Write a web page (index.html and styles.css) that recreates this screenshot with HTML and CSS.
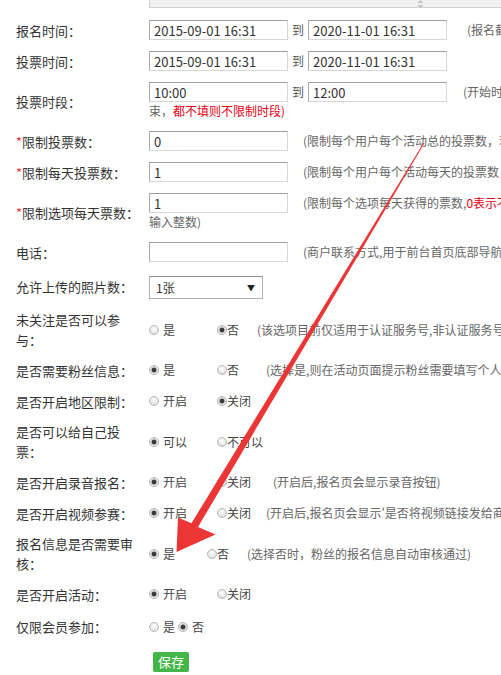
FILE: index.html
```html
<!DOCTYPE html>
<html lang="zh-CN">
<head>
    <meta charset="UTF-8">
    <meta name="viewport" content="width=device-width, initial-scale=1.0">
    <title>活动设置</title>
    <link rel="stylesheet" href="styles.css">
</head>
<body>
    <div class="page">
        <table class="form">
            <tr class="row-tail">
                <th></th>
                <td>
                    <div class="textarea-tail">
                        <svg class="grip" width="7" height="8" viewBox="0 0 7 8"><path d="M3.5 0 L6.5 3 H0.5 Z M3.5 8 L6.5 5 H0.5 Z" fill="#c4c4c4"/></svg>
                    </div>
                </td>
            </tr>
            <tr>
                <th>报名时间：</th>
                <td>
                    <div class="line">
                        <input class="text" type="text" value="2015-09-01 16:31">
                        <span class="to">到</span>
                        <input class="text" type="text" value="2020-11-01 16:31">
                        <span class="hint gap-20">(报名截止时间之后粉丝将不能再报名参加活动)</span>
                    </div>
                </td>
            </tr>
            <tr>
                <th>投票时间：</th>
                <td>
                    <div class="line">
                        <input class="text" type="text" value="2015-09-01 16:31">
                        <span class="to">到</span>
                        <input class="text" type="text" value="2020-11-01 16:31">
                    </div>
                </td>
            </tr>
            <tr>
                <th>投票时段：</th>
                <td>
                    <div class="line">
                        <input class="text" type="text" value="10:00">
                        <span class="to">到</span>
                        <input class="text" type="text" value="12:00">
                        <span class="hint gap-16">(开始时间和结束时间需同时填写，填写后每天只有在该时段内才可以投票，开始时间不能大于结</span>
                    </div>
                    <div class="line-2 hint">束，<span class="red">都不填则不限制时段)</span></div>
                </td>
            </tr>
            <tr>
                <th><span class="req">*</span>限制投票数：</th>
                <td>
                    <div class="line">
                        <input class="text" type="text" value="0">
                        <span class="hint">(限制每个用户每个活动总的投票数，若为0则不限制)</span>
                    </div>
                </td>
            </tr>
            <tr>
                <th><span class="req">*</span>限制每天投票数：</th>
                <td>
                    <div class="line">
                        <input class="text" type="text" value="1">
                        <span class="hint">(限制每个用户每个活动每天的投票数，0表示不限制)</span>
                    </div>
                </td>
            </tr>
            <tr>
                <th><span class="req">*</span>限制选项每天票数：</th>
                <td>
                    <div class="line">
                        <input class="text" type="text" value="1">
                        <span class="hint">(限制每个选项每天获得的票数,<span class="red">0表示不限制</span>，请</span>
                    </div>
                    <div class="line-2 hint">输入整数)</div>
                </td>
            </tr>
            <tr>
                <th>电话：</th>
                <td>
                    <div class="line">
                        <input class="text" type="text" value="">
                        <span class="hint">(商户联系方式,用于前台首页底部导航的一键拨号)</span>
                    </div>
                </td>
            </tr>
            <tr class="row-select">
                <th>允许上传的照片数：</th>
                <td>
                    <div class="select">
                        <select>
                            <option>1张</option>
                            <option>2张</option>
                            <option>3张</option>
                        </select>
                        <span class="caret">▼</span>
                    </div>
                </td>
            </tr>
            <tr>
                <th>未关注是否可以参与：</th>
                <td>
                    <div class="line">
                        <label class="opt opt-first"><input class="radio" type="radio" name="follow">是</label>
                        <label class="opt opt-tight"><input class="radio" type="radio" name="follow" checked>否</label>
                        <span class="hint gap-18">(该选项目前仅适用于认证服务号,非认证服务号请选择是)</span>
                    </div>
                </td>
            </tr>
            <tr>
                <th>是否需要粉丝信息：</th>
                <td>
                    <div class="line">
                        <label class="opt opt-first"><input class="radio" type="radio" name="fans" checked>是</label>
                        <label class="opt opt-tight"><input class="radio" type="radio" name="fans">否</label>
                        <span class="hint gap-27">(选择是,则在活动页面提示粉丝需要填写个人资料)</span>
                    </div>
                </td>
            </tr>
            <tr>
                <th>是否开启地区限制：</th>
                <td>
                    <div class="line">
                        <label class="opt opt-first"><input class="radio" type="radio" name="area">开启</label>
                        <label class="opt opt-tight"><input class="radio" type="radio" name="area" checked>关闭</label>
                    </div>
                </td>
            </tr>
            <tr>
                <th>是否可以给自己投票：</th>
                <td>
                    <div class="line">
                        <label class="opt opt-first"><input class="radio" type="radio" name="self" checked>可以</label>
                        <label class="opt opt-tight"><input class="radio" type="radio" name="self">不可以</label>
                    </div>
                </td>
            </tr>
            <tr>
                <th>是否开启录音报名：</th>
                <td>
                    <div class="line">
                        <label class="opt opt-first"><input class="radio" type="radio" name="voice" checked>开启</label>
                        <label class="opt opt-tight"><input class="radio" type="radio" name="voice">关闭</label>
                        <span class="hint gap-22">(开启后,报名页会显示录音按钮)</span>
                    </div>
                </td>
            </tr>
            <tr>
                <th>是否开启视频参赛：</th>
                <td>
                    <div class="line">
                        <label class="opt opt-first"><input class="radio" type="radio" name="video" checked>开启</label>
                        <label class="opt opt-tight"><input class="radio" type="radio" name="video">关闭</label>
                        <span class="hint">(开启后,报名页会显示'是否将视频链接发给商家')</span>
                    </div>
                </td>
            </tr>
            <tr>
                <th>报名信息是否需要审核：</th>
                <td>
                    <div class="line">
                        <label class="opt opt-first opt-narrow"><input class="radio" type="radio" name="audit" checked>是</label>
                        <label class="opt opt-tight"><input class="radio" type="radio" name="audit">否</label>
                        <span class="hint gap-18">(选择否时，粉丝的报名信息自动审核通过)</span>
                    </div>
                </td>
            </tr>
            <tr>
                <th>是否开启活动：</th>
                <td>
                    <div class="line">
                        <label class="opt opt-first"><input class="radio" type="radio" name="open" checked>开启</label>
                        <label class="opt opt-tight"><input class="radio" type="radio" name="open">关闭</label>
                    </div>
                </td>
            </tr>
            <tr class="row-member">
                <th>仅限会员参加：</th>
                <td>
                    <div class="line">
                        <label class="opt opt-pair"><input class="radio" type="radio" name="member">是</label>
                        <label class="opt"><input class="radio" type="radio" name="member" checked>否</label>
                    </div>
                </td>
            </tr>
            <tr class="row-submit">
                <th></th>
                <td><button class="btn-save" type="button">保存</button></td>
            </tr>
        </table>

        <svg class="arrow" width="501" height="675" viewBox="0 0 501 675">
            <polygon points="424.4,143.3 198,527 215.5,534.5 176.5,552 178,517.5 191.5,523.2 423.6,142.7" fill="#ec3535"/>
        </svg>
    </div>
</body>
</html>
```

FILE: styles.css
```css
body {
    margin: 0;
    background-color: #fff;
    font-family: "Noto Sans CJK SC", "Microsoft YaHei", sans-serif;
    color: #333;
}
.page {
    position: relative;
    overflow: hidden;
    height: 675px;
}
.form {
    table-layout: fixed;
    width: 1000px;
    border-collapse: collapse;
    border-spacing: 0;
    line-height: 20px;
}
.form th {
    width: 127px;
    padding: 5px 6px 5px 16px;
    text-align: left;
    font-weight: normal;
    font-size: 13px;
    color: #333;
    vertical-align: middle;
}
.form td {
    padding: 5px 0 6px;
    white-space: nowrap;
    vertical-align: middle;
}
.row-tail th,
.row-tail td {
    padding-top: 0;
    padding-bottom: 7px;
}
.textarea-tail {
    display: flex;
    align-items: center;
    width: 600px;
    height: 8px;
    box-sizing: border-box;
    background-color: #f1f1f1;
    border: 1px solid #cfcfcf;
    border-top: none;
}
.grip {
    margin-left: 267px;
}
.row-select td {
    padding-top: 7px;
    padding-bottom: 6px;
}
.row-member td {
    padding-top: 7px;
    padding-bottom: 7px;
}
.row-submit td {
    padding: 6px 0 5px;
}
.line {
    display: flex;
    align-items: center;
    height: 20px;
}
.line > * {
    flex-shrink: 0;
}
.line-2 {
    line-height: 18px;
}
.text {
    width: 139px;
    height: 20px;
    box-sizing: border-box;
    margin: 0;
    padding: 0 4px;
    border: 1px solid #d6d6d6;
    border-top-color: #9e9e9e;
    border-left-color: #ababab;
    font-family: inherit;
    font-size: 13px;
    color: #333;
    outline: none;
}
.to {
    margin: 0 4px 0 4px;
    font-size: 12px;
    color: #555;
}
.hint {
    margin-left: 15px;
    font-size: 12px;
    color: #666;
}
.line-2.hint {
    margin-left: 0;
}
.gap-16 { margin-left: 16px; }
.gap-18 { margin-left: 18px; }
.gap-20 { margin-left: 20px; }
.gap-22 { margin-left: 22px; }
.gap-27 { margin-left: 27px; }
.red {
    color: #e60012;
}
.req {
    color: #e8383d;
}
.select {
    display: inline-flex;
    align-items: center;
    width: 114px;
    height: 23px;
    box-sizing: border-box;
    border: 1px solid #b0b0b0;
    border-top-color: #8f8f8f;
    background-color: #fff;
    vertical-align: middle;
}
.select select {
    -webkit-appearance: none;
    appearance: none;
    flex: 1;
    min-width: 0;
    height: 100%;
    border: none;
    padding: 0 0 0 6px;
    background: transparent;
    font-family: inherit;
    font-size: 12px;
    color: #333;
    outline: none;
}
.caret {
    margin-right: 7px;
    font-size: 8px;
    color: #222;
}
.opt {
    display: inline-flex;
    align-items: center;
    font-size: 12px;
    color: #444;
}
.opt-first {
    width: 68px;
}
.opt-narrow {
    width: 58px;
}
.opt-pair {
    margin-right: 3px;
}
.radio {
    -webkit-appearance: none;
    appearance: none;
    width: 10px;
    height: 10px;
    margin: 0 4px 0 0;
    border: 1px solid #b8b8b8;
    border-radius: 50%;
    background: radial-gradient(circle at 50% 35%, #fdfdfd 0, #e4e4e4 65%, #d2d2d2 100%);
}
.radio:checked {
    background: radial-gradient(circle, #3a3a3a 0, #3a3a3a 2px, #d8d8d8 2.8px, #f2f2f2 100%);
}
.opt-tight .radio {
    margin-right: 0;
}
.btn-save {
    margin-left: 4px;
    width: 36px;
    height: 20px;
    padding: 0;
    border: none;
    border-radius: 2px;
    background-color: #44b549;
    color: #fff;
    font-family: inherit;
    font-size: 13px;
    line-height: 20px;
    cursor: pointer;
}
.arrow {
    position: absolute;
    left: 0;
    top: 0;
    pointer-events: none;
}
```
